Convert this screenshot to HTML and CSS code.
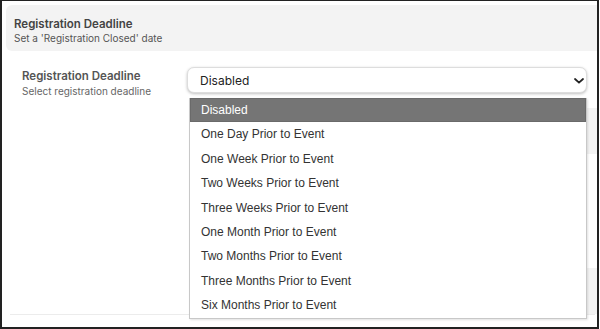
FILE: index.html
```html
<!DOCTYPE html>
<html lang="en">
<head>
  <meta charset="UTF-8">
  <title>Registration Deadline</title>
  <meta name="viewport" content="width=device-width, initial-scale=1.0">
  <link rel="stylesheet" href="styles.css">
</head>
<body>
  <div class="frame">
    <div class="section-head">
      <h2>Registration Deadline</h2>
      <p>Set a 'Registration Closed' date</p>
    </div>

    <div class="field-row">
      <div class="field-label">
        <h3>Registration Deadline</h3>
        <p>Select registration deadline</p>
      </div>
      <div class="select-wrap">
        <div class="select-box">
          <span>Disabled</span>
          <svg class="chevron" width="10" height="6" viewBox="0 0 10 6">
            <path d="M1 1 L5 4.6 L9 1" fill="none" stroke="#222" stroke-width="1.8" stroke-linecap="round"/>
          </svg>
        </div>
        <ul class="dropdown">
          <li class="selected">Disabled</li>
          <li>One Day Prior to Event</li>
          <li>One Week Prior to Event</li>
          <li>Two Weeks Prior to Event</li>
          <li>Three Weeks Prior to Event</li>
          <li>One Month Prior to Event</li>
          <li>Two Months Prior to Event</li>
          <li>Three Months Prior to Event</li>
          <li>Six Months Prior to Event</li>
        </ul>
      </div>
    </div>

    <div class="under">
      <div class="ghost ghost-top"></div>
      <div class="ghost ghost-bottom"></div>
      <div class="divider"></div>
    </div>
  </div>
</body>
</html>
```

FILE: styles.css
```css
* {
  box-sizing: border-box;
  margin: 0;
  padding: 0;
}

body {
  font-family: Inter, "Noto Sans", sans-serif;
  background: #fff;
  width: 600px;
  height: 329px;
  overflow: hidden;
}

.frame {
  width: 599px;
  height: 329px;
  border: 2px solid #222;
  border-top-width: 1px;
  background: #fff;
  overflow: hidden;
}

.section-head {
  margin: 4px 0 0 4px;
  height: 46px;
  background: #f3f3f3;
  border-radius: 6px 0 0 6px;
  padding: 12px 8px 0;
}

.section-head h2 {
  font-size: 11.5px;
  font-weight: 600;
  color: #444;
  line-height: 15px;
}

.section-head p {
  font-size: 10px;
  color: #555;
  line-height: 14px;
  margin-top: -1px;
}

.field-row {
  display: flex;
  margin-top: 16px;
  padding-left: 20px;
}

.field-label {
  width: 165px;
  padding-top: 2px;
}

.field-label h3 {
  font-size: 11.5px;
  font-weight: 600;
  color: #555;
  line-height: 15px;
}

.field-label p {
  font-size: 10px;
  color: #666;
  line-height: 14px;
}

.select-wrap {
  position: relative;
  width: 400px;
}

.select-box {
  height: 26px;
  border: 1px solid #ddd;
  border-radius: 7px;
  box-shadow: 0 1px 3px rgba(0, 0, 0, 0.25);
  display: flex;
  align-items: center;
  justify-content: space-between;
  padding: 0 2px 0 12px;
  font-size: 12px;
  color: #222;
  background: #fff;
}

.chevron {
  margin-top: 1px;
}

.dropdown {
  position: absolute;
  top: 31px;
  left: 2px;
  width: 398px;
  list-style: none;
  background: #fff;
  border: 1px solid #c8c8c8;
  border-top: none;
  box-shadow: 1px 1px 2px rgba(0, 0, 0, 0.12);
  font-family: "Liberation Sans", Arial, sans-serif;
  font-size: 12px;
  color: #333;
  z-index: 10;
}

.dropdown li {
  height: 24.4px;
  line-height: 23.4px;
  padding: 1px 0 0 11px;
}

.dropdown li.selected {
  background: #757575;
  color: #fff;
  border: 1px solid #6a6a6a;
  line-height: 22.4px;
  padding: 0 0 0 10px;
}

.under {
  position: relative;
  margin-top: 10px;
}

.ghost {
  margin-left: 188px;
  background: #f3f3f3;
  height: 46px;
}

.ghost-bottom {
  margin-top: 114px;
}

.divider {
  margin: 0 2px 0 8px;
  height: 1px;
  background: #ececec;
}
```
